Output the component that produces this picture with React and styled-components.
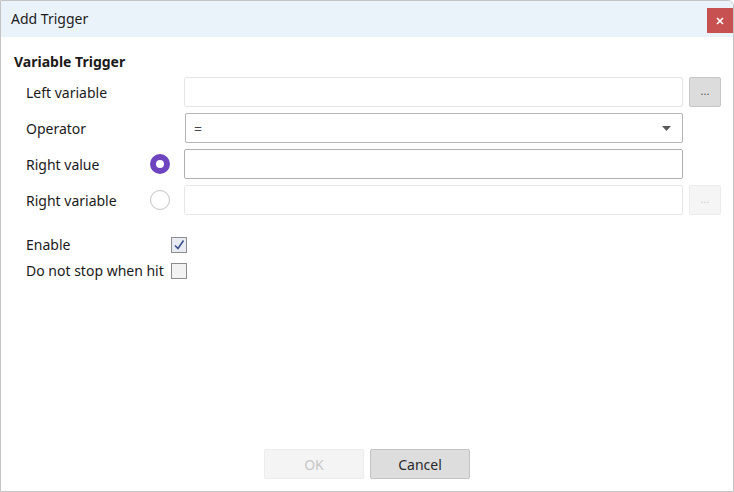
import React from 'react';
import styled, { createGlobalStyle } from 'styled-components';

const GlobalStyle = createGlobalStyle`
  html, body {
    margin: 0;
    padding: 0;
    background: #ffffff;
  }
  body {
    font-family: "Noto Sans", "Open Sans", sans-serif;
    font-size: 14px;
    color: #1a1a1a;
  }
`;

const Window = styled.div`
  box-sizing: border-box;
  width: 734px;
  height: 492px;
  border: 1px solid #c4c4c4;
  border-radius: 0 6px 0 0;
  display: flex;
  flex-direction: column;
  background: #fff;
  overflow: hidden;
`;

const TitleBar = styled.div`
  height: 36px;
  flex-shrink: 0;
  background: #eaf3f9;
  display: flex;
  align-items: center;
  justify-content: space-between;
  padding: 0 10px 0 10px;
`;

const Title = styled.div`
  font-size: 14px;
  color: #1c1c1c;
  margin-top: -1px;
`;

const CloseButton = styled.button`
  width: 26px;
  height: 25px;
  margin-right: -10px;
  margin-top: 7px;
  align-self: flex-start;
  border: none;
  background: #c75050;
  display: flex;
  align-items: center;
  justify-content: center;
  padding: 0;
`;

const Body = styled.div`
  flex: 1;
  display: flex;
  flex-direction: column;
  padding: 14px 12px 0 12px;
`;

const SectionTitle = styled.div`
  font-weight: bold;
  font-size: 14px;
  height: 22px;
  line-height: 22px;
  margin-bottom: 4px;
  padding-left: 1px;
`;

const Form = styled.div`
  display: grid;
  grid-template-columns: 124px 34px 499px 38px;
  grid-auto-rows: 30px;
  row-gap: 6px;
  padding-left: 13px;
  align-items: center;
`;

const Label = styled.div`
  font-size: 14px;
  line-height: 32px;
  height: 30px;
  white-space: nowrap;
`;

const RadioCell = styled.div`
  display: flex;
  align-items: center;
  justify-content: flex-start;
`;

const Radio = styled.span`
  box-sizing: border-box;
  width: 20px;
  height: 20px;
  border-radius: 50%;
  border: ${p => (p.$checked ? '6px solid #6f45bf' : '1.5px solid #c2c2c2')};
  background: #fff;
`;

const Field = styled.div`
  box-sizing: border-box;
  height: 30px;
  margin-left: ${p => (p.$shift ? '1px' : '0')};
  width: ${p => (p.$shift ? '498px' : '499px')};
  border: 1px solid ${p => p.$border};
  border-radius: 2px;
  background: #fff;
  display: flex;
  align-items: center;
  justify-content: space-between;
  padding: 0 11px 0 8px;
  color: #444;
`;

const BrowseButton = styled.button`
  box-sizing: border-box;
  width: 32px;
  height: 30px;
  margin-left: 6px;
  border: 1px solid ${p => (p.$disabled ? '#ececec' : '#c6c6c6')};
  background: ${p => (p.$disabled ? '#f5f5f5' : '#dcdcdc')};
  border-radius: 2px;
  color: ${p => (p.$disabled ? '#cfcfcf' : '#555')};
  font-family: inherit;
  font-size: 11px;
  padding: 0 0 4px 0;
  line-height: 1;
`;

const CheckRows = styled.div`
  display: flex;
  flex-direction: column;
  gap: 7px;
  padding-left: 13px;
  margin-top: 20px;
`;

const CheckRow = styled.div`
  display: flex;
  align-items: center;
  height: 19px;
`;

const CheckLabel = styled.div`
  width: 145px;
  white-space: nowrap;
  font-size: 14px;
`;

const Box = styled.span`
  box-sizing: border-box;
  width: 16px;
  height: 16px;
  border: 1px solid #8c8c8c;
  background: ${p => (p.$checked ? '#e9ebf2' : '#f2f2f2')};
  display: flex;
  align-items: center;
  justify-content: center;
`;

const Footer = styled.div`
  margin-top: auto;
  display: flex;
  justify-content: center;
  gap: 6px;
  padding-bottom: 12px;
`;

const DialogButton = styled.button`
  box-sizing: border-box;
  width: 100px;
  height: 30px;
  border: 1px solid ${p => (p.$disabled ? '#ececec' : '#c2c2c2')};
  background: ${p => (p.$disabled ? '#f4f4f4' : '#dddddd')};
  color: ${p => (p.$disabled ? '#c6c6c6' : '#2a2a2a')};
  font-family: inherit;
  font-size: 14px;
  border-radius: 2px;
  padding: 0;
`;

const CloseIcon = () => (
  <svg width="8" height="8" viewBox="0 0 8 8">
    <path d="M1 1 L7 7 M7 1 L1 7" stroke="#fff" strokeWidth="1.6" />
  </svg>
);

const Arrow = () => (
  <svg width="9" height="5" viewBox="0 0 9 5">
    <path d="M0 0 H9 L4.5 5 Z" fill="#5a5a5a" />
  </svg>
);

const Check = () => (
  <svg width="12" height="12" viewBox="0 0 12 12">
    <path d="M2 6.5 L5 9.5 L10.5 1.5" stroke="#3a4f8c" strokeWidth="1.6" fill="none" />
  </svg>
);

export default function App() {
  return (
    <>
      <GlobalStyle />
      <Window>
        <TitleBar>
          <Title>Add Trigger</Title>
          <CloseButton><CloseIcon /></CloseButton>
        </TitleBar>
        <Body>
          <SectionTitle>Variable Trigger</SectionTitle>
          <Form>
            <Label>Left variable</Label>
            <RadioCell />
            <Field $border="#e4e4e4" />
            <BrowseButton>...</BrowseButton>

            <Label>Operator</Label>
            <RadioCell />
            <Field $border="#b4b4b4" $shift>
              <span>=</span>
              <Arrow />
            </Field>
            <div />

            <Label>Right value</Label>
            <RadioCell><Radio $checked /></RadioCell>
            <Field $border="#b0b0b0" />
            <div />

            <Label>Right variable</Label>
            <RadioCell><Radio /></RadioCell>
            <Field $border="#e8e8e8" />
            <BrowseButton $disabled>...</BrowseButton>
          </Form>
          <CheckRows>
            <CheckRow>
              <CheckLabel>Enable</CheckLabel>
              <Box $checked><Check /></Box>
            </CheckRow>
            <CheckRow>
              <CheckLabel>Do not stop when hit</CheckLabel>
              <Box />
            </CheckRow>
          </CheckRows>
          <Footer>
            <DialogButton $disabled>OK</DialogButton>
            <DialogButton>Cancel</DialogButton>
          </Footer>
        </Body>
      </Window>
    </>
  );
}
